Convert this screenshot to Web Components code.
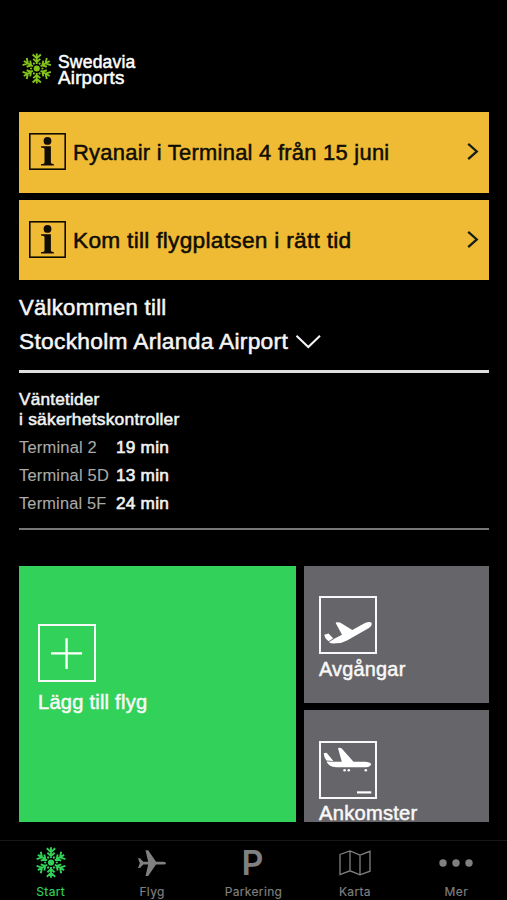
<!DOCTYPE html>
<html lang="sv"><head><meta charset="utf-8"><title>Swedavia Airports</title>
<style>html,body{margin:0;background:#000}body{width:507px;height:900px;overflow:hidden}</style></head>
<body><airport-app></airport-app>
<script>
const define = (name, html, after) => customElements.define(name, class extends HTMLElement {
  connectedCallback() {
    if (this.shadowRoot) return;
    const t = document.createElement('template');
    t.innerHTML = typeof html === 'function' ? html(this) : html;
    this.attachShadow({mode: 'open'}).append(t.content.cloneNode(true));
    if (after) after(this);
  }
});

/* One line of text, widened to fill the width attribute. */
define('fit-text', `<style>
:host{display:block;white-space:nowrap;font-family:"Liberation Sans",Arial,sans-serif;font-kerning:normal;font-variant-ligatures:none}
span{display:inline-block;vertical-align:top;transform-origin:0 0;letter-spacing:.012em;-webkit-text-stroke:var(--weight,.5px) currentColor}
</style><span><slot></slot></span>`, el => {
  const s = el.shadowRoot.querySelector('span'), w = +el.getAttribute('width');
  s.style.transform = `scaleX(${w / s.getBoundingClientRect().width})`;
  el.style.width = w + 'px';
});

const arm = a => `<g transform="rotate(${a})"><path d="M0-4.5V-15.2M-4.2-14.2 0-10.4 4.2-14.2M-3.6-9.8 0-6.6 3.6-9.8"/></g><circle transform="rotate(${a + 30})" cy="-5.8" r="1.1" fill="currentColor" stroke="none"/>`;
define('snow-flake', `<style>:host{display:block}svg{display:block;width:100%;height:100%}</style>
<svg viewBox="-16 -16 32 32" fill="none" stroke="currentColor" stroke-width="1.9">${[0,60,120,180,240,300].map(arm).join('')}<circle r="3.1" fill="currentColor" stroke="none"/></svg>`);

define('brand-logo', `<style>
:host{display:flex;padding:52px 0 0 20.5px;box-sizing:border-box;height:112px;color:#fff;font-size:18px;line-height:16px}
snow-flake{width:31.5px;height:33px;color:#84c41a;margin-right:6px}
div{padding-top:1.5px}
</style><snow-flake></snow-flake><div><fit-text width="77.5">Swedavia</fit-text><fit-text width="66.5">Airports</fit-text></div>`);

define('notice-card', `<style>
:host{display:flex;align-items:flex-start;box-sizing:border-box;height:80.6px;padding:20.7px 10px 0;background:#efbb35;color:#100d04;font-size:21.6px;line-height:24px}
.i{width:37px;height:37px;margin-right:7px;flex:none}
slot{display:block;padding-top:8.3px}
.c{width:13px;height:19px;margin:9px 0 0 auto}
svg{display:block}
</style><svg class="i" viewBox="0 0 37 37"><rect x=".8" y=".8" width="35.4" height="35.4" fill="none" stroke="currentColor" stroke-width="1.6"/><circle cx="18.5" cy="7.9" r="3.9" fill="currentColor"/><path fill="currentColor" d="M12 13.2H21.9V29.5Q21.9 31 24.8 31V32.4H12V31Q15.5 31 15.5 29.5V16.3Q15.5 14.6 12 14.6Z"/></svg>
<slot></slot><svg class="c" viewBox="0 0 13 19" fill="none" stroke="#172016" stroke-width="2.3"><path d="M2.2 1.9 10.8 9.4 2.2 17.1"/></svg>`);

define('airport-picker', `<style>
:host{display:block;box-sizing:border-box;height:92.6px;padding-top:15.3px;border-bottom:3px solid #dedede;color:#f5f5f5;font-size:21.8px;line-height:24px}
div{display:flex;margin-top:10px}
svg{margin:0 0 0 8px;width:26px;height:24px}
</style><fit-text width="147.5">Välkommen till</fit-text><div><fit-text width="269">Stockholm Arlanda Airport</fit-text>
<svg viewBox="0 0 26 24" fill="none" stroke="currentColor" stroke-width="2"><path d="M.5 5.8 12.3 17 24 5.8"/></svg></div>`);

define('wait-row', el => `<style>
:host{display:grid;grid-template-columns:96.5px auto;justify-content:start;height:28.2px;font-size:16.8px;line-height:28.2px;color:#aaa}
.v{color:#f2f2f2;--weight:.6px}.l{--weight:.1px}
</style><fit-text class="l" width="${el.getAttribute('lw')}">${el.getAttribute('label')}</fit-text><fit-text class="v" width="53">${el.getAttribute('value')}</fit-text>`);

define('wait-times', `<style>
:host{display:block;box-sizing:border-box;height:156.9px;padding-top:15.7px;border-bottom:2px solid #777;color:#f2f2f2;font-size:16.2px;line-height:20.6px}
.rows{padding-top:4px}
</style><fit-text width="80.5">Väntetider</fit-text><fit-text width="160.5">i säkerhetskontroller</fit-text>
<div class="rows"><wait-row label="Terminal 2" lw="78" value="19 min"></wait-row><wait-row label="Terminal 5D" lw="90" value="13 min"></wait-row><wait-row label="Terminal 5F" lw="87.5" value="24 min"></wait-row></div>`);

const pictures = {
  add: `<path d="M28.6 14.2V45M13.1 29.3H44.1" stroke="#fff" stroke-width="2.3"/>`,
  depart: `<path fill="#fff" d="M5.3 38.7 9.6 37.6Q12 40.5 14.2 42.2L9.8 45.3Q6 43 5.3 38.7ZM9.8 46.2 15.2 42.7 23 38.8 16.8 27.2Q16.5 26.3 18 26.2L21 26.6 33.3 34 45.5 27.3Q50.5 25.2 52.6 26.8 53.5 29.7 49.5 32.2L28 44.4Q23 47.2 17 47.3 12 47.7 9.8 46.2Z"/>`,
  arrive: `<path fill="#fff" d="M4.7 12.2 7.6 11.8 14.4 20 7.4 19.4Q4.8 16 4.7 12.2ZM7.6 20.4 14.8 20.7H22.8L19 7.2Q19.5 6.2 22.5 7.2L34.5 20.7H46Q51 20.9 52.2 23 51.5 26 47 26.2H17Q9.5 25.8 7.6 20.4Z"/><circle cx="25.6" cy="29.2" r="1.3" fill="#fff"/><circle cx="29.8" cy="29.2" r="1.3" fill="#fff"/><circle cx="46.8" cy="29.2" r="1.3" fill="#fff"/><path d="M38 51.4H52.3" stroke="#fff" stroke-width="2.2"/>`
};
define('action-tile', el => `<style>
:host{display:block;box-sizing:border-box;overflow:hidden;color:#f8f8f8;font-size:19.3px;line-height:22px}
svg{display:block;width:58px;height:58px;margin-bottom:var(--gap,4.6px)}fit-text{--weight:.5px}
</style><svg viewBox="0 0 58 58"><rect x="1" y="1" width="56" height="56" fill="none" stroke="#f8f8f8" stroke-width="2"/>${pictures[el.getAttribute('icon')]}</svg><slot></slot>`);

define('tile-grid', `<style>
:host{display:grid;height:256.3px;margin-top:36px;grid-template-columns:277.3px 1fr;grid-template-rows:136.6px 1fr;gap:7.3px}
.add{--gap:9.6px;grid-row:1/3;background:#32d159;padding:58px 0 0 19.3px}
.dep{background:#666569;padding:30px 0 0 15.4px}.arr{--gap:4px;background:#666569;padding:31.2px 0 0 15.4px}
</style><action-tile class="add" icon="add"><fit-text width="109.3">Lägg till flyg</fit-text></action-tile>
<action-tile class="dep" icon="depart"><fit-text width="86.5">Avgångar</fit-text></action-tile>
<action-tile class="arr" icon="arrive"><fit-text width="98.5">Ankomster</fit-text></action-tile>`);

define('tab-item', `<style>
:host{display:flex;flex-direction:column;align-items:center;color:#808080;font:12px/14px Inter,sans-serif}
.icon{height:43.5px;display:flex;align-items:center}
::slotted(*){display:block}
.t{letter-spacing:.35px;-webkit-text-stroke:.15px currentColor}
</style><div class="icon"><slot name="icon"></slot></div><div class="t"><slot></slot></div>`);

define('tab-bar', `<style>
:host{display:grid;grid-template-columns:repeat(5,1fr);height:60px;box-sizing:border-box;border-top:1px solid #171717}
.on{color:#32d159}snow-flake{width:32px;height:33px}
.p{font:600 34px/38px Inter,sans-serif;height:38px;margin-right:2px}
svg{overflow:visible}
</style>
<tab-item class="on"><snow-flake slot="icon"></snow-flake>Start</tab-item>
<tab-item><svg slot="icon" width="30" height="28" viewBox="0 0 30 28" fill="currentColor"><path d="M1 9.3H3L6.3 12.8H11.2L8.5 1.2H11.2L19 12.8H26.5Q29 13 29 14.2T26.5 15.6H19L11.2 27.1H8.5L11.2 15.6H6.3L3 19H1L2.8 14.2Z"/></svg>Flyg</tab-item>
<tab-item><div slot="icon" class="p">P</div>Parkering</tab-item>
<tab-item><svg slot="icon" width="32" height="26" viewBox="0 0 32 26" fill="none" stroke="currentColor" stroke-width="1.3"><path d="M1 4.5 11 1 21 5 31 1.3V21.2L21 24.8 11 20.8 1 24.5ZM11 1V20.8M21 5V24.8"/></svg>Karta</tab-item>
<tab-item><svg slot="icon" width="34" height="8" viewBox="0 0 34 8" fill="currentColor"><circle cx="4" cy="4" r="3.7"/><circle cx="17" cy="4" r="3.7"/><circle cx="30" cy="4" r="3.7"/></svg>Mer</tab-item>`);

define('airport-app', `<style>
:host{display:flex;flex-direction:column;width:507px;height:900px;background:#000;overflow:hidden}
main{padding:0 18.5px 0 19.2px;flex:1}
notice-card+notice-card{margin-top:7.3px}
</style><brand-logo></brand-logo><main>
<notice-card><fit-text width="316.5">Ryanair i Terminal 4 från 15 juni</fit-text></notice-card>
<notice-card><fit-text width="278.5">Kom till flygplatsen i rätt tid</fit-text></notice-card>
<airport-picker></airport-picker><wait-times></wait-times><tile-grid></tile-grid></main><tab-bar></tab-bar>`);
</script></body></html>
